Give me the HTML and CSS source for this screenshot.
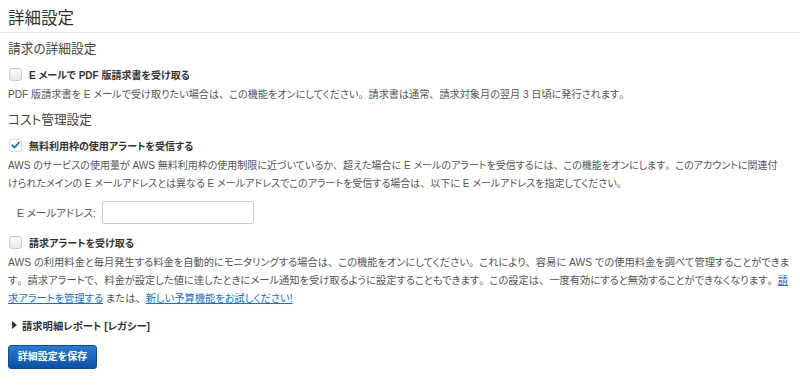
FILE: index.html
```html
<!DOCTYPE html>
<html lang="ja">
<head>
<meta charset="utf-8">
<link rel="stylesheet" href="styles.css">
</head>
<body>
<div class="page">
  <h1 class="title">詳細設定</h1>

  <h2 class="section">請求の詳細設定</h2>
  <label class="check-row">
    <span class="box"></span>
    <span class="check-label">E メールで PDF 版請求書を受け取る</span>
  </label>
  <p class="desc desc-pdf">PDF 版請求書を E メールで受け取りたい場合は<span class="pu">、</span>この機能をオンにしてください<span class="pu">。</span>請求書は通常<span class="pu">、</span>請求対象月の翌月 3 日頃に発行されます<span class="pu">。</span></p>

  <h2 class="section">コスト管理設定</h2>
  <label class="check-row">
    <span class="box checked"><svg viewBox="0 0 12 12" width="12" height="12"><path d="M2.3 6.2 L4.9 8.7 L9.8 3.3" fill="none" stroke="#1a73c8" stroke-width="2" stroke-linecap="round" stroke-linejoin="round"/></svg></span>
    <span class="check-label">無料利用枠の使用アラートを受信する</span>
  </label>
  <p class="desc desc-lines">AWS のサービスの使用量が AWS 無料利用枠の使用制限に近づいているか<span class="pu">、</span>超えた場合に E メールのアラートを受信するには<span class="pu">、</span>この機能をオンにします<span class="pu">。</span>このアカウントに関連付<br>けられたメインの E メールアドレスとは異なる E メールアドレスでこのアラートを受信する場合は<span class="pu">、</span>以下に E メールアドレスを指定してください<span class="pu">。</span></p>

  <div class="email-row">
    <span class="email-label">E メールアドレス:</span>
    <span class="email-input"></span>
  </div>

  <label class="check-row alert-row">
    <span class="box"></span>
    <span class="check-label">請求アラートを受け取る</span>
  </label>
  <p class="desc desc-lines desc-alert">AWS の利用料金と毎月発生する料金を自動的にモニタリングする場合は<span class="pu">、</span>この機能をオンにしてください<span class="pu">。</span>これにより<span class="pu">、</span>容易に AWS での使用料金を調べて管理することができま<br>す<span class="pu">。</span>請求アラートで<span class="pu">、</span>料金が設定した値に達したときにメール通知を受け取るように設定することもできます<span class="pu">。</span>この設定は<span class="pu">、</span>一度有効にすると無効することができなくなります<span class="pu">。</span><a class="link" href="#">請<br>求アラートを管理する</a> または<span class="pu">、</span><a class="link" href="#">新しい予算機能をお試しください!</a></p>

  <div class="legacy">
    <span class="tri"></span>
    <span class="legacy-label">請求明細レポート [レガシー]</span>
  </div>

  <div class="actions">
    <span class="btn">詳細設定を保存</span>
  </div>
</div>
</body>
</html>
```

FILE: styles.css
```css
html, body {
  margin: 0;
  padding: 0;
  background: #fff;
}
body {
  font-family: "Liberation Sans", "Noto Sans CJK JP", sans-serif;
  color: #444;
  font-size: 11px;
  font-feature-settings: "palt";
}
.pu {
  font-feature-settings: normal;
}
.page {
  padding: 7px 2px 0 8px;
}
.title {
  margin: 0 -2px 0 -8px;
  padding: 0 0 3px 8px;
  font-size: 16.5px;
  font-weight: normal;
  color: #333;
  line-height: 22px;
  border-bottom: 1px solid #e4e4e4;
}
.section {
  margin: 6px 0 0 0;
  font-size: 12.7px;
  font-weight: normal;
  color: #444;
  line-height: 20px;
}
.check-row {
  display: flex;
  align-items: center;
  gap: 7px;
  height: 18px;
  margin-top: 6px;
  padding-left: 1px;
}
.alert-row {
  margin-top: 9px;
}
.box {
  width: 11px;
  height: 11px;
  border: 1px solid #c8c8c8;
  border-radius: 3px;
  background: linear-gradient(#fafafa, #e9e9e9);
  display: flex;
  align-items: center;
  justify-content: center;
  flex: none;
}
.box.checked {
  border-color: #d8d8d8;
  background: #fff;
}
.check-label {
  font-weight: bold;
  font-size: 10px;
  color: #333;
}
.desc {
  margin: 3px 0 0 0;
  font-size: 10px;
  line-height: 18px;
  color: #555;
}
.desc-lines {
  white-space: nowrap;
}
.desc-pdf {
  font-size: 10.15px;
}
.desc-alert {
  font-size: 10.26px;
}
.link {
  color: #1a6fc0;
  text-decoration: underline;
}
.email-row {
  display: flex;
  align-items: center;
  gap: 6px;
  margin-top: 8px;
  padding-left: 9px;
}
.email-label {
  font-size: 10.5px;
  color: #555;
}
.email-input {
  width: 150px;
  height: 21px;
  border: 1px solid #ccc;
  border-radius: 2px;
  background: #fff;
}
.legacy {
  display: flex;
  align-items: center;
  gap: 5px;
  margin-top: 9px;
  padding-left: 4px;
  height: 16px;
}
.tri {
  width: 0;
  height: 0;
  border-left: 5px solid #333;
  border-top: 4px solid transparent;
  border-bottom: 4px solid transparent;
}
.legacy-label {
  font-weight: bold;
  font-size: 10.3px;
  color: #333;
}
.actions {
  margin-top: 12px;
}
.btn {
  display: inline-block;
  width: 87px;
  height: 22px;
  line-height: 22px;
  text-align: center;
  border: 1px solid #0d4c97;
  border-radius: 3px;
  background: linear-gradient(#2a7bd0, #0b51a6);
  color: #fff;
  font-weight: bold;
  font-size: 10px;
}
```
